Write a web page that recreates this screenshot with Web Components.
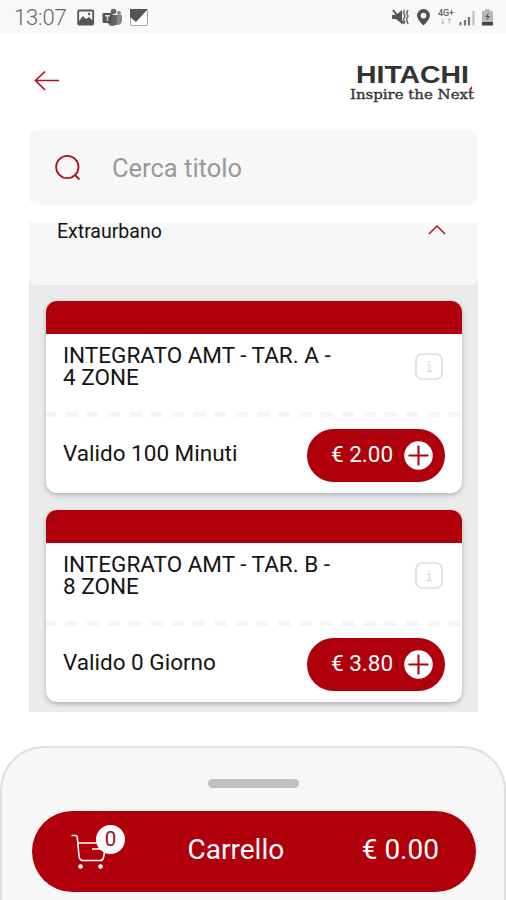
<!DOCTYPE html>
<html lang="it">
<head>
<meta charset="utf-8">
<title>Titoli di viaggio</title>
<style>
html,body{margin:0;height:100%;background:#fff;overflow:hidden}
body{font-family:Roboto,"Noto Sans",sans-serif;color:#141414}
</style>
</head>
<body>
<ticket-shop></ticket-shop>
<script>
const define = (name, html) => {
  const template = document.createElement('template');
  template.innerHTML = html;
  customElements.define(name, class extends HTMLElement {
    constructor() {
      super();
      this.attachShadow({mode: 'open'}).append(template.content.cloneNode(true));
    }
  });
};

define('status-bar', `
<style>
:host{display:flex;box-sizing:border-box;height:34px;background:#f8f8f8;color:#666;align-items:center;padding:1px 10px 0 14px;justify-content:space-between}
time{font-size:22px;line-height:34px;letter-spacing:-.2px;font-weight:300;width:63px}
.side{display:flex;align-items:center}
svg{display:block}
.net{display:flex;flex-direction:column;align-items:center;font:500 9px/9px Roboto,sans-serif;width:18px;margin:0 3px 0 6px}
.net i{font:8px/8px "DejaVu Sans",sans-serif;color:#aaa}
</style>
<div class="side"><time>13:07</time>
<svg width="73" height="20" viewBox="77 8 73 20">
<rect x="78.2" y="10.5" width="15" height="14" rx="1" fill="none" stroke="#555" stroke-width="1.8"/><path d="M79 21l4-5 3 3 3-2 4 4v3H79z" fill="#555"/><circle cx="89" cy="14" r="1.2" fill="#555"/>
<circle cx="113.500" cy="11.500" r="2.800" fill="#666"/><circle cx="119" cy="13" r="2" fill="#888"/><path d="M115 15h7v5q0 5-5 5h-2z" fill="#888"/><path d="M109 15h8v6q0 5-5 5-3 0-4-3z" fill="#666"/><rect x="102.500" y="13" width="10" height="10" rx="1" fill="#555"/><path d="M105 15.700h5M107.500 15.700v5" stroke="#ddd" stroke-width="1.400"/>
<rect x="130.500" y="9.500" width="17" height="16" rx="1.500" fill="#fff" stroke="#aaa"/><path d="M130 9h18L136 22l-6-5z" fill="#555"/>
</svg></div>
<div class="side">
<svg width="40" height="22" viewBox="390 7 40 22"><path d="M391 15h4l6-5v14l-6-5h-4z" fill="#555"/><path d="M392 10l11 14" stroke="#555" stroke-width="2"/><path d="M403.500 10l-1 3 1.500 3-1.500 3 1.500 4M407 10l-1.500 3 1.500 3-1.500 3 1.500 5" fill="none" stroke="#666" stroke-width="1.500"/><path fill-rule="evenodd" d="M422.500 9a6.500 6.500 0 0 0-6.500 6.500c0 4 6.500 10 6.500 10s6.500-6 6.500-10A6.500 6.500 0 0 0 422.500 9zm0 3.700a2.900 2.900 0 1 1 0 5.800 2.900 2.900 0 0 1 0-5.800z" fill="#505050"/></svg>
<span class="net">4G+<i>↓↑</i></span>
<svg width="38" height="22" viewBox="458 7 38 22"><path d="M460.500 22v3.500" stroke="#777" stroke-width="2"/><path d="M465 20v5.500M469 17v8.500" stroke="#777" stroke-width="2.200"/><path d="M473.500 11v14.500" stroke="#bbb" stroke-width="2"/><path d="M482 11h3V9h5v2h3v14h-11z" fill="#b8b8b8"/><path d="M482 22h11v3.500h-11z" fill="#444"/><path d="M489 12l-4 5h2.500l-1.500 4 4-5h-2.500z" fill="#555"/></svg>
</div>`);

define('brand-logo', `
<style>:host{display:block}svg{display:block}</style>
<svg width="130" height="42" viewBox="348 62 130 42">
<text x="356" y="83" font-family="Liberation Sans,sans-serif" font-weight="700" font-size="23" textLength="113" lengthAdjust="spacingAndGlyphs" fill="#333">HITACHI</text>
<text x="350" y="99" font-family="DejaVu Serif,serif" font-size="13.500" textLength="124" lengthAdjust="spacingAndGlyphs" fill="#333" stroke="#333" stroke-width=".35">Inspire the Next</text>
<path d="M468.500 89.500l3.500-3.500v3.500z" fill="#d0102c"/></svg>`);

define('app-header', `
<style>:host{display:flex;height:96px;box-sizing:border-box;padding:28px 28px 0 34px;justify-content:space-between;align-items:flex-start}
svg{display:block;margin-top:7px}</style>
<svg width="26" height="24" viewBox="34 69 26 24" fill="none" stroke="#b3101d" stroke-width="1.700"><path d="M59 80.500H35.500M45 71.500l-9.500 9 9.500 9.500"/></svg>
<brand-logo></brand-logo>`);

define('search-field', `
<style>:host{display:flex;align-items:center;height:75px;margin:0 28px 0 29px;background:#f7f7f7;border-radius:8px;box-sizing:border-box;padding-left:25px}
span{margin-left:30px;font-size:25.500px;line-height:30px;color:#999;letter-spacing:0}</style>
<svg width="28" height="28" viewBox="54 154 28 28" fill="none" stroke="#b3101d" stroke-width="1.800"><circle cx="67.300" cy="167" r="11.200"/><path d="M74.500 174.500l5 5"/></svg>
<span><slot></slot></span>`);

define('accordion-header', `
<style>:host{display:flex;justify-content:space-between;height:63px;background:#f7f7f7;border-radius:0 0 8px 8px;padding:0 32px 0 28px}
span{font-size:19.500px;line-height:20px;margin-top:-.5px}svg{margin-top:2px;display:block}</style>
<span><slot></slot></span>
<svg width="18" height="12" viewBox="429 224 18 12" fill="none" stroke="#b3101d" stroke-width="1.500"><path d="M430 234l8-8 8 8"/></svg>`);

define('price-button', `
<style>:host{display:flex;align-items:center;box-sizing:border-box;width:138px;height:53px;border-radius:27px;background:#b0000b;color:#fff;padding:0 12px 0 24px;justify-content:space-between}
span{font-size:22.500px;line-height:26px;margin-top:-4px;white-space:nowrap}svg{display:block}</style>
<span><slot></slot></span>
<svg width="29" height="29" viewBox="0 0 29 29"><circle cx="14.500" cy="14.500" r="14.300" fill="#fff"/><path d="M4.500 14.500h20M14.500 4.500v20" stroke="#b0000b" stroke-width="2"/></svg>`);

define('ticket-card', `
<style>
:host{display:block;height:192px;border-radius:11px;background:#fff;overflow:hidden;box-shadow:0 2px 5px rgba(0,0,0,.25)}
.strip{height:33px;background:#b0000b}
.top{box-sizing:border-box;display:flex;justify-content:space-between;height:76px;padding:10px 19px 0 17px}
.title{font-size:22.500px;line-height:22px;white-space:nowrap}
.info{margin-top:9px;display:block}
.dash{display:block}
.bottom{display:flex;justify-content:space-between;padding:12px 17px 0 17px}
.valid{font-size:22.500px;line-height:26px;margin-top:11px}
</style>
<div class="strip"></div>
<div class="top"><div class="title"><slot name="title"></slot></div>
<svg class="info" width="28" height="28" viewBox="0 0 28 28" fill="none" stroke="#dedede" stroke-width="1.700"><rect x="1" y="1" width="26" height="25" rx="6"/><path d="M12 12h2.500v6.500M11.500 18.500h5.500M14 8v2"/></svg></div>
<svg class="dash" width="416" height="7"><path d="M-2 4.500H416" stroke="#f5f5f5" stroke-width="5" stroke-dasharray="12 9.300"/></svg>
<div class="bottom"><div class="valid"><slot name="valid"></slot></div><price-button><slot name="price"></slot></price-button></div>`);

define('ticket-list', `
<style>:host{display:block;box-sizing:border-box;height:490px;margin:17px 28px 0 29px;background:#ebebeb}
.cards{display:flex;flex-direction:column;gap:17px;padding:16px 16px 9px 17px}</style>
<slot name="heading"></slot><div class="cards"><slot></slot></div>`);

define('cart-icon', `
<style>:host{display:block;position:relative;width:54px;height:46px}svg{display:block}
b{position:absolute;left:25px;top:0;width:29px;height:29px;border-radius:50%;background:#fff;color:#8d1420;font-weight:400;font-size:20.500px;line-height:29px;text-align:center}</style>
<svg width="54" height="46" viewBox="71 825 54 46" fill="none" stroke="#fff" stroke-width="1.600"><path d="M71.500 835.500h4q1.500 0 1.800 2l1.700 18.500q.5 4.500 4 4.500h17q3 0 3.500-3l2.500-13M78 843h20M92 849h10"/><circle cx="80.500" cy="866.500" r="2.300" fill="#fff" stroke="none"/><circle cx="100.500" cy="866.500" r="2.300" fill="#fff" stroke="none"/></svg>
<b><slot></slot></b>`);

define('cart-sheet', `
<style>
:host{display:flex;flex-direction:column;align-items:center;box-sizing:border-box;height:170px;margin:34px 0 0;background:#f7f7f7;border:2.500px solid #dfdfdf;border-bottom:0;border-radius:44px 44px 0 0;padding-top:31px}
.handle{width:91px;height:9px;border-radius:5px;background:#c1c1c1}
.bar{display:flex;align-items:center;box-sizing:border-box;width:444px;height:81px;margin:23px 0 0 2px;border-radius:41px;background:#b0000b;color:#fff;padding:0 37px 0 39px;justify-content:space-between;font-size:28px;line-height:32px}
cart-icon{margin-top:-7px}
.label{margin:-4px 0 0 -15px}.total{margin-top:-4px}
</style>
<div class="handle"></div>
<div class="bar"><cart-icon>0</cart-icon><span class="label">Carrello</span><span class="total">€ 0.00</span></div>`);

define('ticket-shop', `
<style>:host{display:block;width:506px;height:900px;overflow:hidden;background:#fff}</style>
<status-bar></status-bar><app-header></app-header>
<search-field>Cerca titolo</search-field>
<ticket-list><accordion-header slot="heading">Extraurbano</accordion-header>
<ticket-card><span slot="title">INTEGRATO AMT - TAR. A -<br>4 ZONE</span><span slot="valid">Valido 100 Minuti</span><span slot="price">€ 2.00</span></ticket-card>
<ticket-card><span slot="title">INTEGRATO AMT - TAR. B -<br>8 ZONE</span><span slot="valid">Valido 0 Giorno</span><span slot="price">€ 3.80</span></ticket-card>
</ticket-list>
<cart-sheet></cart-sheet>`);
</script>
</body>
</html>
